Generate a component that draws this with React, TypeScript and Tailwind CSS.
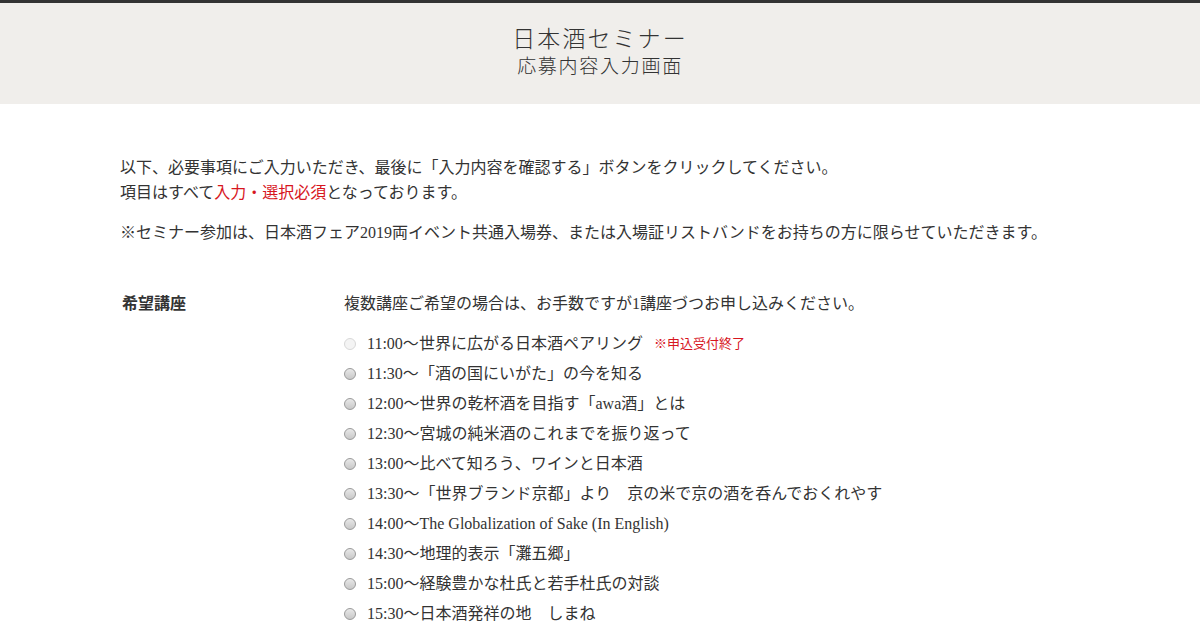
const seminars = [
  { time: "11:00", title: "世界に広がる日本酒ペアリング", closed: true },
  { time: "11:30", title: "「酒の国にいがた」の今を知る" },
  { time: "12:00", title: "世界の乾杯酒を目指す「awa酒」とは" },
  { time: "12:30", title: "宮城の純米酒のこれまでを振り返って" },
  { time: "13:00", title: "比べて知ろう、ワインと日本酒" },
  { time: "13:30", title: "「世界ブランド京都」より　京の米で京の酒を呑んでおくれやす" },
  { time: "14:00", title: "The Globalization of Sake (In English)" },
  { time: "14:30", title: "地理的表示「灘五郷」" },
  { time: "15:00", title: "経験豊かな杜氏と若手杜氏の対談" },
  { time: "15:30", title: "日本酒発祥の地　しまね" },
];

const Radio = ({ disabled }: { disabled?: boolean }) => (
  <span
    className={
      disabled
        ? "inline-block w-[12px] h-[12px] rounded-full border border-[#d8d8d8] bg-[#f4f4f4] shrink-0"
        : "inline-block w-[12px] h-[12px] rounded-full border border-[#9a9a9a] bg-gradient-to-b from-[#e8e8e8] to-[#c8c8c8] shrink-0"
    }
  />
);

export default function App() {
  return (
    <div className="min-h-screen bg-white text-[#333] font-['Liberation_Serif','Noto_Sans_CJK_JP',serif]">
      {/* header */}
      <div className="border-t-[3px] border-[#333] bg-[#f0eeeb] h-[104px] flex flex-col items-center pt-[21px]">
        <h1 className="font-['Noto_Sans_CJK_JP',sans-serif] font-light text-[23px] leading-[26px] tracking-[0.09em] text-[#333]">
          日本酒セミナー
        </h1>
        <p className="mt-[2px] font-['Noto_Sans_CJK_JP',sans-serif] font-light text-[19px] leading-[26px] tracking-[0.09em] text-[#333]">
          応募内容入力画面
        </p>
      </div>

      {/* intro */}
      <div className="w-[960px] mx-auto pt-[51px] text-[16px]">
        <p className="leading-[25px]">
          以下、必要事項にご入力いただき、最後に「入力内容を確認する」ボタンをクリックしてください。
          <br />
          項目はすべて<span className="text-[#d7161e]">入力・選択必須</span>となっております。
        </p>
        <p className="leading-[25px] mt-[15px]">
          ※セミナー参加は、日本酒フェア2019両イベント共通入場券、または入場証リストバンドをお持ちの方に限らせていただきます。
        </p>

        {/* form row */}
        <div className="flex mt-[46px]">
          <div className="w-[224px] pl-[2px] font-bold leading-[25px]">希望講座</div>
          <div className="flex-1">
            <p className="leading-[25px]">
              複数講座ご希望の場合は、お手数ですが1講座づつお申し込みください。
            </p>
            <ul className="mt-[13px] flex flex-col">
              {seminars.map((s) => (
                <li key={s.time} className="flex items-center h-[30px]">
                  <Radio disabled={s.closed} />
                  <span className="ml-[11px]">
                    {s.time}〜{s.title}
                  </span>
                  {s.closed && (
                    <span className="ml-[11px] text-[13px] text-[#d7161e]">※申込受付終了</span>
                  )}
                </li>
              ))}
            </ul>
          </div>
        </div>
      </div>
    </div>
  );
}
